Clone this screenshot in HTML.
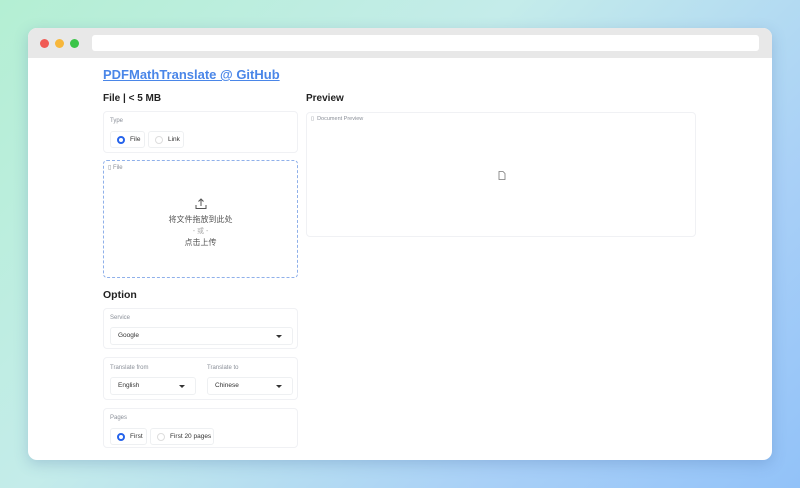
<!DOCTYPE html>
<html><head><meta charset="utf-8"><style>
*{box-sizing:border-box;margin:0;padding:0}
body{width:800px;height:488px;overflow:hidden;font-family:"Liberation Sans","Noto Sans CJK SC",sans-serif;background:linear-gradient(135deg,#b4efd3 0%,#c4ecea 40%,#a9d0f7 75%,#92c2f8 100%);position:relative}
.win{position:absolute;left:28px;top:28px;width:744px;height:432px;background:#fff;border-radius:9px;overflow:hidden;box-shadow:0 4px 14px rgba(60,100,160,.25)}
.bar{height:30px;background:#e8e8e8;position:relative}
.dot{position:absolute;top:11px;width:9px;height:9px;border-radius:50%}
.addr{position:absolute;left:64px;top:7px;width:667px;height:16px;background:#fff;border-radius:3px}
.a{position:absolute}
.box{position:absolute;border:1px solid #f0f1f4;border-radius:4px;background:#fff}
.lbl{position:absolute;font-size:6px;color:#8a8f98}
.h{position:absolute;font-weight:bold;color:#222;}
.radio{position:absolute;height:17px;border:1px solid #eef0f2;border-radius:3px;font-size:6.5px;color:#333;padding-left:19px;line-height:15px}
.radio i{position:absolute;left:6px;top:4px;width:8px;height:8px;border-radius:50%;border:1px solid #ddd}
.radio i.on{border:2.5px solid #2563eb;}
.sel{position:absolute;height:18px;border:1px solid #eef0f2;border-radius:3px;font-size:6.5px;color:#333;padding-left:7px;line-height:16px}
.sel:after{content:"";position:absolute;right:10px;top:7px;border-left:3px solid transparent;border-right:3px solid transparent;border-top:3px solid #333}
</style></head><body>
<div class="win">
<div class="bar"><div class="dot" style="left:12px;background:#f05b55"></div><div class="dot" style="left:27px;background:#f7b73b"></div><div class="dot" style="left:42px;background:#3ac448"></div><div class="addr"></div></div>
<div class="a" style="left:75px;top:39px;font-size:13px;font-weight:bold;color:#4a86e8;text-decoration:underline">PDFMathTranslate @ GitHub</div>
<div class="h" style="left:75px;top:65px;font-size:10px">File | &lt; 5 MB</div>
<div class="box" style="left:75px;top:83px;width:195px;height:42px">
 <div class="lbl" style="left:6px;top:6px">Type</div>
 <div class="radio" style="left:6px;top:19px;width:35px"><i class="on"></i>File</div>
 <div class="radio" style="left:44px;top:19px;width:36px"><i></i>Link</div>
</div>
<div class="box" style="left:75px;top:132px;width:195px;height:118px;border:1px dashed #8fb0ea">
 <div class="lbl" style="left:4px;top:3px">▯ File</div>
 <svg class="a" style="left:91px;top:37px" width="12" height="12" viewBox="0 0 12 12" fill="none" stroke="#555" stroke-width="1"><path d="M6 8V1M3.5 3.5L6 1 8.5 3.5M1 7v3.5h10V7"/></svg>
 <div class="a" style="left:0;width:100%;top:53px;text-align:center;font-size:8px;color:#555">将文件拖放到此处</div>
 <div class="a" style="left:0;width:100%;top:65px;text-align:center;font-size:7px;color:#aaa">- 或 -</div>
 <div class="a" style="left:0;width:100%;top:76px;text-align:center;font-size:8px;color:#555">点击上传</div>
</div>
<div class="h" style="left:75px;top:261px;font-size:10.5px">Option</div>
<div class="box" style="left:75px;top:280px;width:195px;height:41px">
 <div class="lbl" style="left:6px;top:6px">Service</div>
 <div class="sel" style="left:6px;top:18px;width:183px">Google</div>
</div>
<div class="box" style="left:75px;top:329px;width:195px;height:43px">
 <div class="lbl" style="left:6px;top:7px">Translate from</div>
 <div class="lbl" style="left:103px;top:7px">Translate to</div>
 <div class="sel" style="left:6px;top:19px;width:86px">English</div>
 <div class="sel" style="left:103px;top:19px;width:86px">Chinese</div>
</div>
<div class="box" style="left:75px;top:380px;width:195px;height:40px">
 <div class="lbl" style="left:6px;top:6px">Pages</div>
 <div class="radio" style="left:6px;top:19px;width:37px"><i class="on"></i>First</div>
 <div class="radio" style="left:46px;top:19px;width:64px"><i></i>First 20 pages</div>
</div>
<div class="h" style="left:278px;top:65px;font-size:10px">Preview</div>
<div class="box" style="left:278px;top:84px;width:390px;height:125px">
 <div class="lbl" style="left:4px;top:3px;font-size:5.5px">▯ &nbsp;Document Preview</div>
 <svg class="a" style="left:191px;top:58px" width="8" height="9" viewBox="0 0 8 9" fill="none" stroke="#777" stroke-width=".8"><path d="M1 .5h4l2 2v6H1z"/></svg>
</div>
</div>
</body></html>
